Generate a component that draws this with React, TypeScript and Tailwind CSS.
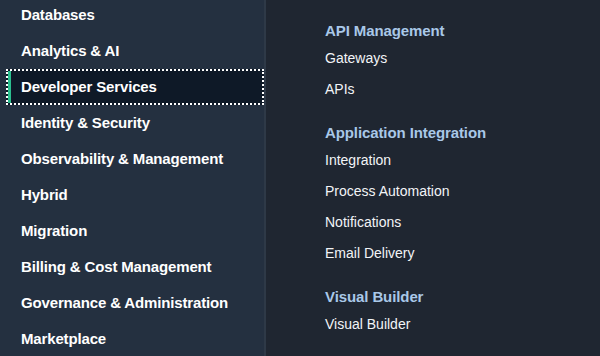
const CATEGORIES = [
  "Databases",
  "Analytics & AI",
  "Developer Services",
  "Identity & Security",
  "Observability & Management",
  "Hybrid",
  "Migration",
  "Billing & Cost Management",
  "Governance & Administration",
  "Marketplace",
];

const SECTIONS = [
  { title: "API Management", items: ["Gateways", "APIs"] },
  {
    title: "Application Integration",
    items: ["Integration", "Process Automation", "Notifications", "Email Delivery"],
  },
  { title: "Visual Builder", items: ["Visual Builder"] },
];

export default function App() {
  return (
    <div
      className="flex h-[356px] w-[600px] overflow-hidden bg-[#1f2631]"
      style={{ fontFamily: '"Liberation Sans", Arial, sans-serif' }}
    >
      {/* Category list */}
      <nav className="flex w-[266px] shrink-0 flex-col border-r-2 border-[#2e3947] bg-[#243040]">
        <ul className="-mt-[3px] flex flex-col">
          {CATEGORIES.map((c) =>
            c === "Developer Services" ? (
              <li
                key={c}
                className="ml-[6px] flex h-[36px] items-center border-2 border-dotted border-white bg-[#0e1927]"
              >
                <span className="h-full w-[3px] bg-[#2bbf8f]" />
                <span className="pl-[10px] text-[15px] font-bold tracking-[-0.15px] text-white">{c}</span>
              </li>
            ) : (
              <li
                key={c}
                className="flex h-[36px] items-center pl-[21px] text-[15px] font-bold tracking-[-0.15px] text-white"
              >
                {c}
              </li>
            )
          )}
        </ul>
      </nav>

      {/* Sub menu */}
      <div className="flex flex-col pl-[59px] pt-[22px]">
        {SECTIONS.map((s) => (
          <div key={s.title} className="mb-[19px] flex flex-col">
            <h3 className="text-[15px] font-bold leading-[18px] tracking-[-0.1px] text-[#a9c8e8]">{s.title}</h3>
            <ul className="mt-[3px] flex flex-col">
              {s.items.map((i) => (
                <li key={i} className="flex h-[31px] items-center text-[14px] text-[#f2f4f7]">
                  {i}
                </li>
              ))}
            </ul>
          </div>
        ))}
      </div>
    </div>
  );
}
